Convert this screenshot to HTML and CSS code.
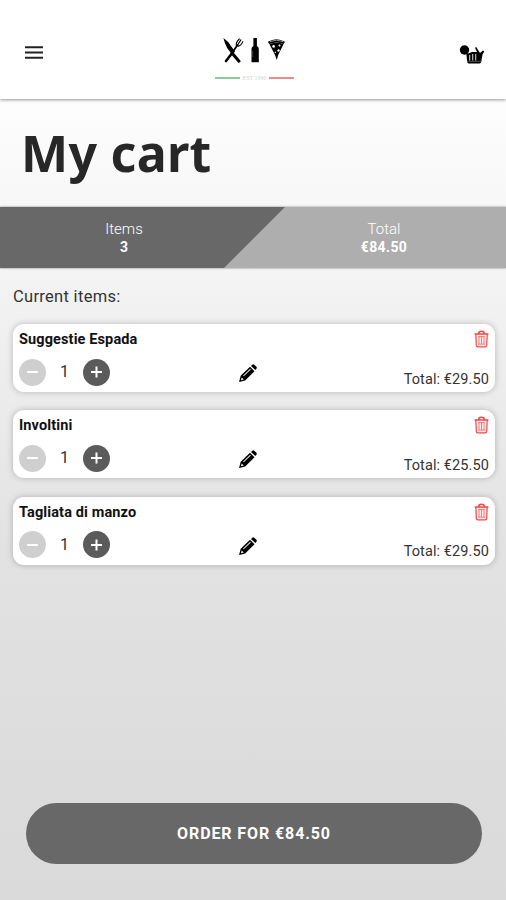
FILE: index.html
```html
<!DOCTYPE html>
<html lang="en">
<head>
<meta charset="utf-8">
<title>My cart</title>
<link rel="stylesheet" href="styles.css">
</head>
<body>
<svg class="defs" aria-hidden="true">
  <symbol id="trash" viewBox="0 0 15 18">
    <path d="M.6 4h13.8M4.6 3.8Q4.6 1.2 7.5 1.2t2.9 2.6" fill="none" stroke="currentColor" stroke-width="1.5"/>
    <path d="M1.8 4l.5 11.4q.1 1.5 1.5 1.5h7.4q1.4 0 1.5-1.5L13.2 4" fill="currentColor" fill-opacity=".12" stroke="currentColor" stroke-width="1.2"/>
    <path d="M5 6.6v7.4M7.5 6.6v7.4M10 6.6v7.4M4 14.2h7M4.3 6.6h6.4" fill="none" stroke="currentColor" stroke-opacity=".75" stroke-width=".9"/>
  </symbol>
  <symbol id="pencil" viewBox="0 0 18 18">
    <path fill="currentColor" fill-rule="evenodd" d="M0 18l1.7-6.2L11 2.8l4.5 4.4-9.3 9.2zM1.9 16.2l2.8-.8-2-2zM4.1 11.7l.6.6 7.1-6.9-.6-.6zM12 1.9L13.3.7q1-.9 2 0l2.1 2.1q.9 1 0 2l-1.1 1.3z"/>
  </symbol>
</svg>
<header class="topbar">
  <svg class="menu" viewBox="0 0 18 13"><path d="M0 1.2h18M0 6.5h18M0 11.7h18" stroke="#222" stroke-width="2"/></svg>
  <div class="logo">
    <svg class="logo-icons" viewBox="0 0 64 26">
      <g fill="none" stroke="#000" stroke-linecap="round">
        <path d="M10 15L3 24" stroke-width="2.6"/>
        <path d="M9 16L16 24.2" stroke-width="3"/>
        <path d="M9 16L14.5 8" stroke-width="1.8"/>
        <path d="M13.3 8.3q-.5-3 3-6.3M14.7 7.7l3.2-4.8M15 9.1q3-.3 4.8-4.5M13.3 8.3l2.4 1" stroke-width="1.1"/>
      </g>
      <path d="M.4 1Q5 4 8 9l4 5.6-2.6 2.4Q3 12 .4 1z"/>
      <path d="M30.4 1h3.5v8q1.9 1.2 1.9 3v13.3h-7.3V12q0-1.8 1.9-3z"/>
      <path d="M29.7 14v6" stroke="#777" stroke-width=".5"/>
      <path d="M44.8 4.8Q53.5-.3 62 4.8L60.6 7Q53.5 3.8 46.3 7z"/>
      <path d="M46.5 7.3Q53.5 4.4 60.5 7.3L55.2 18l-1.4 5-1.8-5z"/>
      <g fill="#fff"><circle cx="50.6" cy="9.4" r="1.3"/><circle cx="56.5" cy="8.5" r="1"/><circle cx="55.5" cy="13.5" r="1.2"/><circle cx="52.3" cy="15.3" r=".7"/></g>
      <path d="M46.8 4.6q6.7-2.8 13.3 0" stroke="#ddd" stroke-width=".7" fill="none"/>
    </svg>
    <div class="logo-rule"><i class="green"></i><span>EST 1996</span><i class="red"></i></div>
  </div>
  <svg class="basket" viewBox="0 0 26 20">
    <path d="M7.3 9.5H9l4-1.5h5l-2-4.2 1.2-.8 3.8 6 3-2.5 1.3 1-1.8 3-1.2 7.3q-.3 1.6-1.8 1.6H9.7q-1.3 0-1.5-1.4z"/>
    <path d="M10.7 11v5.5M13.7 10v6.5M16.7 10v6.5" stroke="#ccc" stroke-width="1.1"/>
    <path d="M8 17.3h14" stroke="#888" stroke-width=".6"/>
    <circle cx="5.5" cy="6" r="4.7"/>
  </svg>
</header>
<main>
  <h1>My cart</h1>
  <section class="summary">
    <div class="items"><span>Items</span><b>3</b></div>
    <div class="total"><span>Total</span><b class="amount">€84.50</b></div>
  </section>
  <p class="caption">Current items:</p>
  <div class="list">
    <article class="card">
      <h2>Suggestie Espada</h2><svg class="trash"><use href="#trash"/></svg>
      <div class="qty"><button class="minus" aria-label="Less"></button><span>1</span><button class="plus" aria-label="More"></button></div>
      <svg class="pencil"><use href="#pencil"/></svg>
      <span class="price">Total: €29.50</span>
    </article>
    <article class="card">
      <h2>Involtini</h2><svg class="trash"><use href="#trash"/></svg>
      <div class="qty"><button class="minus" aria-label="Less"></button><span>1</span><button class="plus" aria-label="More"></button></div>
      <svg class="pencil"><use href="#pencil"/></svg>
      <span class="price">Total: €25.50</span>
    </article>
    <article class="card">
      <h2>Tagliata di manzo</h2><svg class="trash"><use href="#trash"/></svg>
      <div class="qty"><button class="minus" aria-label="Less"></button><span>1</span><button class="plus" aria-label="More"></button></div>
      <svg class="pencil"><use href="#pencil"/></svg>
      <span class="price">Total: €29.50</span>
    </article>
  </div>
  <button class="order">ORDER FOR €84.50</button>
</main>
</body>
</html>
```
FILE: styles.css
```css
* { box-sizing: border-box; }
body {
  margin: 0;
  height: 900px;
  display: flex;
  flex-direction: column;
  overflow: hidden;
  font-family: Roboto, sans-serif;
  color: #333;
}
.defs { display: none; }
button { border: 0; padding: 0; font-family: inherit; }

.topbar {
  height: 99px;
  flex: none;
  background: #fff;
  box-shadow: 0 1px 3px rgba(0, 0, 0, .4);
  position: relative;
  display: grid;
  grid-template-columns: 1fr 80px 1fr;
  padding: 0 21px 0 25px;
}
.menu { width: 18px; height: 13px; margin-top: 46px; }
.logo { padding-top: 37px; width: 79px; }
.logo-icons { display: block; width: 64px; height: 26px; margin-left: 8px; }
.logo-rule { display: flex; align-items: center; justify-content: space-between; height: 6px; margin-top: 12px; }
.logo-rule i { width: 25px; height: 2px; }
.logo-rule span { font: 6px/6px "Liberation Serif", serif; color: #d4d4d4; white-space: nowrap; }
.green { background: #8ccb98; }
.red { background: #f08a8a; }
.basket { width: 26px; height: 20px; margin-top: 44px; justify-self: end; }

main {
  flex: 1;
  display: flex;
  flex-direction: column;
  background: linear-gradient(#fdfdfd 0, #f2f2f2 200px, #e2e2e2 450px, #dcdcdc 680px, #dadada);
}
h1 {
  margin: 0;
  height: 108px;
  padding: 20px 0 0 21px;
  font: bold 50px/68px "Noto Sans", sans-serif;
  letter-spacing: .3px;
  color: #272727;
}
.summary {
  height: 61px;
  display: grid;
  grid-template-columns: 248px 272px;
  background: #aeaeae;
  position: relative;
  overflow: hidden;
  box-shadow: 0 0 2px rgba(0, 0, 0, .5);
  flex: none;
}
.summary::before {
  content: "";
  position: absolute;
  inset: 0 auto 0 0;
  width: 285px;
  background: #686868;
  clip-path: polygon(0 0, 100% 0, 224px 100%, 0 100%);
}
.summary div {
  position: relative;
  display: flex;
  flex-direction: column;
  align-items: center;
  padding-top: 13px;
  font-size: 15px;
  line-height: 18px;
  color: #fff;
}
.summary span { font-weight: 300; }
.summary b { font-size: 14px; line-height: 18px; }
.summary .amount { letter-spacing: .35px; }
.caption { margin: 0; padding: 19px 0 0 13px; height: 56px; font-size: 16.5px; line-height: 20px; letter-spacing: .3px; }
.list { display: grid; gap: 18.4px; padding: 0 11px 0 13px; }
.card {
  height: 68px;
  background: #fff;
  border-radius: 11px;
  box-shadow: 0 0 6px rgba(0, 0, 0, .24);
  display: grid;
  grid-template-columns: 220px 20px 1fr;
  grid-template-rows: 28px 40px;
  padding: 0 6px;
}
h2 { margin: 7px 0 0; font-size: 14.5px; line-height: 18px; font-weight: 700; letter-spacing: .12px; color: #111; grid-column: 1 / 3; }
.trash { width: 15px; height: 18px; margin-top: 6px; justify-self: end; color: #f24848; }
.qty { display: flex; height: 28px; margin-top: 6px; align-items: center; }
.qty span { width: 37px; text-align: center; font-size: 16px; line-height: 20px; }
.qty button { width: 27px; height: 27px; border-radius: 50%; display: grid; place-items: center; }
.qty button::before, .plus::after { content: ""; grid-area: 1 / 1; width: 11px; height: 2px; background: #fff; }
.plus::after { transform: rotate(90deg); }
.minus { background: #cfcfcf; }
.plus { background: #5b5b5b; }
.pencil { width: 18px; height: 18px; margin: 12px 0 0; color: #000; }
.price { justify-self: end; margin-top: 17.6px; font-size: 14.5px; line-height: 20px; letter-spacing: .1px; white-space: nowrap; }
.order {
  margin: auto 24px 36px 26px;
  height: 61px;
  border-radius: 31px;
  background: #686868;
  color: #fff;
  font-size: 16px;
  font-weight: 700;
  letter-spacing: .9px;
}
```
